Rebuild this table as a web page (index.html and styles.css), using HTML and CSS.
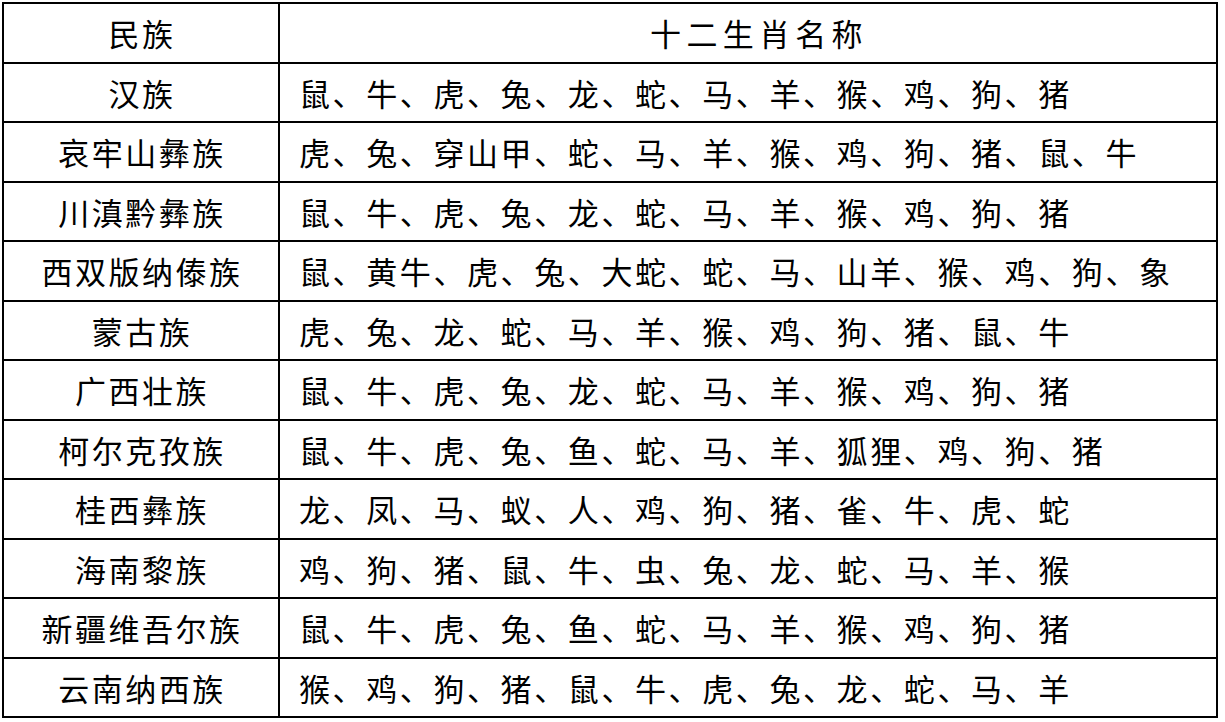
FILE: index.html
```html
<!DOCTYPE html>
<html lang="zh">
<head>
<meta charset="utf-8">
<title>十二生肖名称</title>
<link rel="stylesheet" href="styles.css">
</head>
<body>
<table class="zodiac">
  <thead>
    <tr><th class="col-a">民族</th><th class="col-b">十二生肖名称</th></tr>
  </thead>
  <tbody>
    <tr><td class="col-a">汉族</td><td class="col-b">鼠、牛、虎、兔、龙、蛇、马、羊、猴、鸡、狗、猪</td></tr>
    <tr><td class="col-a">哀牢山彝族</td><td class="col-b">虎、兔、穿山甲、蛇、马、羊、猴、鸡、狗、猪、鼠、牛</td></tr>
    <tr><td class="col-a">川滇黔彝族</td><td class="col-b">鼠、牛、虎、兔、龙、蛇、马、羊、猴、鸡、狗、猪</td></tr>
    <tr><td class="col-a">西双版纳傣族</td><td class="col-b">鼠、黄牛、虎、兔、大蛇、蛇、马、山羊、猴、鸡、狗、象</td></tr>
    <tr><td class="col-a">蒙古族</td><td class="col-b">虎、兔、龙、蛇、马、羊、猴、鸡、狗、猪、鼠、牛</td></tr>
    <tr><td class="col-a">广西壮族</td><td class="col-b">鼠、牛、虎、兔、龙、蛇、马、羊、猴、鸡、狗、猪</td></tr>
    <tr><td class="col-a">柯尔克孜族</td><td class="col-b">鼠、牛、虎、兔、鱼、蛇、马、羊、狐狸、鸡、狗、猪</td></tr>
    <tr><td class="col-a">桂西彝族</td><td class="col-b">龙、凤、马、蚁、人、鸡、狗、猪、雀、牛、虎、蛇</td></tr>
    <tr><td class="col-a">海南黎族</td><td class="col-b">鸡、狗、猪、鼠、牛、虫、兔、龙、蛇、马、羊、猴</td></tr>
    <tr><td class="col-a">新疆维吾尔族</td><td class="col-b">鼠、牛、虎、兔、鱼、蛇、马、羊、猴、鸡、狗、猪</td></tr>
    <tr><td class="col-a">云南纳西族</td><td class="col-b">猴、鸡、狗、猪、鼠、牛、虎、兔、龙、蛇、马、羊</td></tr>
  </tbody>
</table>
</body>
</html>
```

FILE: styles.css
```css
html, body {
  margin: 0;
  padding: 0;
  background: #fff;
}
body {
  padding: 2px 0 0 2px;
  font-family: "Noto Sans CJK SC", "Noto Sans CJK JP", sans-serif;
  color: #000;
}
.zodiac {
  border-collapse: collapse;
  width: 1216px;
  table-layout: fixed;
  border: 2.5px solid #000;
}
.zodiac th,
.zodiac td {
  border: 2px solid #000;
  height: 57.5px;
  padding: 0;
  font-size: 31px;
  font-weight: normal;
  line-height: 1;
  vertical-align: middle;
  white-space: nowrap;
}
.zodiac .col-a {
  width: 272px;
  text-align: center;
  letter-spacing: 2.5px;
  padding-left: 2px;
}
.zodiac td.col-b {
  text-align: left;
  padding-left: 19px;
  letter-spacing: 2.6px;
}
.zodiac th.col-b {
  text-align: center;
  letter-spacing: 5.3px;
  padding-left: 22px;
}
```
